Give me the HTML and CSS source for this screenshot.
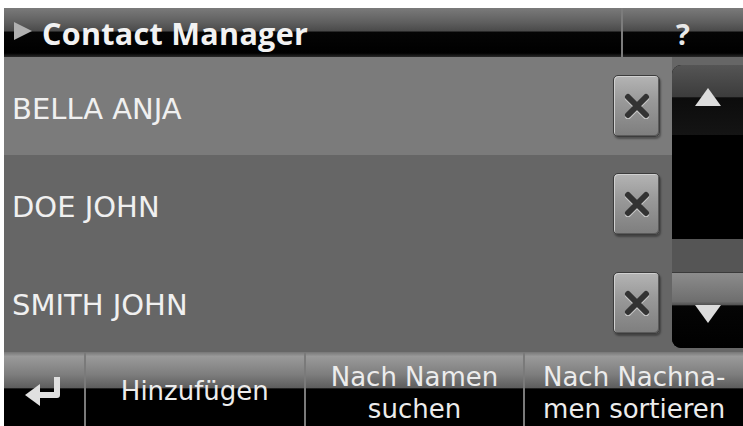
FILE: index.html
```html
<!DOCTYPE html>
<html>
<head>
<meta charset="utf-8">
<link rel="stylesheet" href="styles.css">
</head>
<body>
<div class="screen">
  <header class="topbar">
    <div class="title">
      <svg class="title-arrow" width="20" height="18" viewBox="0 0 20 18"><polygon points="1,0 19,9 1,18" fill="#b0b0b0"/></svg>
      <span>Contact Manager</span>
    </div>
    <div class="help">?</div>
  </header>
  <main class="content">
    <div class="list">
      <div class="row row-selected">
        <span class="name">BELLA ANJA</span>
        <button class="del"><svg width="28" height="26" viewBox="0 0 28 26"><path d="M5 4 L23 22 M23 4 L5 22" stroke="#c8c8c8" stroke-width="6" stroke-linecap="round" transform="translate(0,1.5)"/><path d="M5 4 L23 22 M23 4 L5 22" stroke="#333" stroke-width="6" stroke-linecap="round"/></svg></button>
      </div>
      <div class="row">
        <span class="name">DOE JOHN</span>
        <button class="del"><svg width="28" height="26" viewBox="0 0 28 26"><path d="M5 4 L23 22 M23 4 L5 22" stroke="#c8c8c8" stroke-width="6" stroke-linecap="round" transform="translate(0,1.5)"/><path d="M5 4 L23 22 M23 4 L5 22" stroke="#333" stroke-width="6" stroke-linecap="round"/></svg></button>
      </div>
      <div class="row">
        <span class="name">SMITH JOHN</span>
        <button class="del"><svg width="28" height="26" viewBox="0 0 28 26"><path d="M5 4 L23 22 M23 4 L5 22" stroke="#c8c8c8" stroke-width="6" stroke-linecap="round" transform="translate(0,1.5)"/><path d="M5 4 L23 22 M23 4 L5 22" stroke="#333" stroke-width="6" stroke-linecap="round"/></svg></button>
      </div>
    </div>
    <div class="scroller">
      <div class="scroll-up">
        <svg width="28" height="20" viewBox="0 0 28 20"><polygon points="14,1 27,19 1,19" fill="#dcdcdc"/></svg>
      </div>
      <div class="track"></div>
      <div class="thumb"></div>
      <div class="scroll-down">
        <svg width="28" height="20" viewBox="0 0 28 20"><polygon points="1,1 27,1 14,19" fill="#dcdcdc"/></svg>
      </div>
    </div>
  </main>
  <footer class="bottombar">
    <div class="btn btn-back">
      <svg width="44" height="36" viewBox="0 0 44 36"><path d="M35 4 L35 22 L16 22" stroke="#e0e0e0" stroke-width="6" fill="none" stroke-linejoin="round"/><polygon points="3,22 18,11 18,33" fill="#e0e0e0"/></svg>
    </div>
    <div class="btn"><span class="line">Hinzufügen</span></div>
    <div class="btn btn-two"><span class="line">Nach Namen</span><span class="line">suchen</span></div>
    <div class="btn btn-two"><span class="line">Nach Nachna-</span><span class="line">men sortieren</span></div>
  </footer>
</div>
</body>
</html>
```

FILE: styles.css
```css
html, body {
  margin: 0;
  padding: 0;
  background: #ffffff;
}

.screen {
  width: 743px;
  height: 426px;
  box-sizing: border-box;
  padding: 8px 0 0 4px;
  display: flex;
  flex-direction: column;
  overflow: hidden;
  font-family: "DejaVu Sans", "Open Sans", sans-serif;
}

.topbar {
  height: 49px;
  flex: none;
  display: flex;
  background: linear-gradient(#7a7a7a 0%, #5e5e5e 30%, #4a4a4a 47%, #050505 49%, #000 92%, #2a2a2a 100%);
}

.title {
  flex: 1;
  display: flex;
  align-items: center;
  gap: 9px;
  padding-left: 9px;
  color: #f2f2f2;
  font-family: "Open Sans", "DejaVu Sans", sans-serif;
  font-weight: bold;
  font-size: 30.5px;
  letter-spacing: 0.3px;
  border-right: 2px solid #7c7c7c;
}

.title-arrow {
  flex: none;
  margin-top: -3px;
}

.title span {
  margin-top: 1px;
}

.help {
  width: 120px;
  display: flex;
  justify-content: center;
  align-items: center;
  color: #e8e8e8;
  font-family: "Open Sans", "DejaVu Sans", sans-serif;
  font-weight: bold;
  font-size: 29px;
  padding-top: 2px;
  box-sizing: border-box;
}

.content {
  height: 295px;
  flex: none;
  display: flex;
  background: #666666;
}

.list {
  flex: 1;
  display: flex;
  flex-direction: column;
}

.row {
  flex: 1;
  display: flex;
  align-items: center;
  justify-content: space-between;
  padding-left: 8px;
  padding-right: 12px;
  background: #666666;
}

.row-selected {
  background: #7b7b7b;
}

.name {
  color: #f0f0f0;
  font-size: 29px;
  letter-spacing: 0;
  margin-top: 5px;
}

.del {
  width: 47px;
  height: 62px;
  padding: 0;
  margin: 0;
  border: 1px solid #3c3c3c;
  border-radius: 5px;
  background: linear-gradient(#b4b4b4 0%, #9a9a9a 40%, #7e7e7e 100%);
  box-shadow: inset 1px 1px 0 #d0d0d0, inset -1px -1px 0 #5a5a5a, 1px 2px 2px rgba(0,0,0,0.35);
  display: flex;
  align-items: center;
  justify-content: center;
}

.scroller {
  width: 71px;
  flex: none;
  margin: 8px 0 4px 0;
  border-radius: 9px 0 0 9px;
  overflow: hidden;
  display: flex;
  flex-direction: column;
  background: #000;
}

.scroll-up {
  height: 70px;
  display: flex;
  justify-content: center;
  align-items: flex-start;
  padding-top: 22px;
  box-sizing: border-box;
  background: linear-gradient(#555 0%, #3c3c3c 45%, #0c0c0c 47%, #141414 100%);
}

.track {
  flex: 1;
  background: #000;
}

.thumb {
  height: 33px;
  background: #555555;
  border-bottom: 1px solid #3a3a3a;
}

.scroll-down {
  height: 75px;
  display: flex;
  justify-content: center;
  align-items: flex-start;
  padding-top: 31px;
  box-sizing: border-box;
  background: linear-gradient(#8c8c8c 0%, #6e6e6e 38%, #555 42%, #050505 44%, #000 100%);
}

.bottombar {
  flex: 1;
  display: flex;
}

.btn {
  flex: 1;
  display: flex;
  flex-direction: column;
  align-items: center;
  justify-content: center;
  text-align: center;
  color: #ececec;
  font-size: 26px;
  line-height: 32px;
  border-left: 2px solid #7a7a7a;
  background: linear-gradient(#777 0%, #9a9a9a 6%, #7e7e7e 30%, #5e5e5e 48%, #000 50%, #000 100%);
  padding-top: 4px;
  box-sizing: border-box;
}

.btn-two {
  padding-top: 8px;
}

.line {
  display: block;
  white-space: nowrap;
}

.btn-back {
  flex: none;
  width: 80px;
  border-left: none;
}
```
